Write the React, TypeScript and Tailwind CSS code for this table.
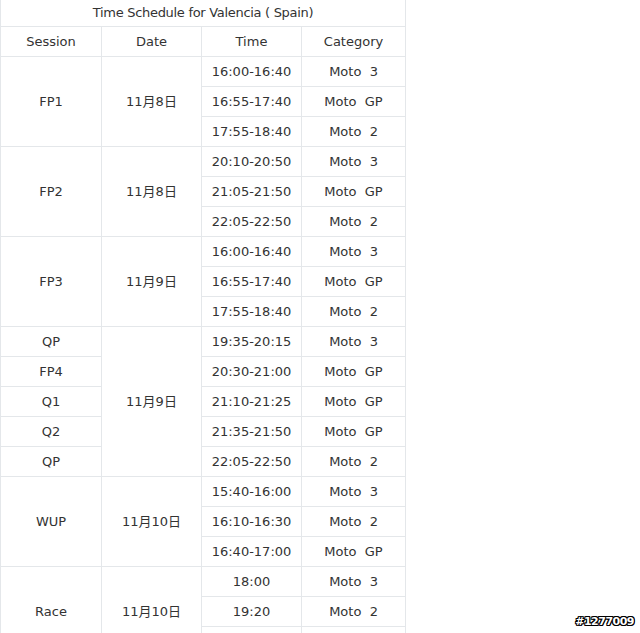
import React from "react";

type Row = { session?: string; sRows?: number; date?: string; dRows?: number; time: string; cat: string };

const rows: Row[] = [
    { session: "FP1", sRows: 3, date: "11月8日", dRows: 3, time: "16:00-16:40", cat: "Moto\u00a0 3" },
    { time: "16:55-17:40", cat: "Moto\u00a0 GP" },
    { time: "17:55-18:40", cat: "Moto\u00a0 2" },
    { session: "FP2", sRows: 3, date: "11月8日", dRows: 3, time: "20:10-20:50", cat: "Moto\u00a0 3" },
    { time: "21:05-21:50", cat: "Moto\u00a0 GP" },
    { time: "22:05-22:50", cat: "Moto\u00a0 2" },
    { session: "FP3", sRows: 3, date: "11月9日", dRows: 3, time: "16:00-16:40", cat: "Moto\u00a0 3" },
    { time: "16:55-17:40", cat: "Moto\u00a0 GP" },
    { time: "17:55-18:40", cat: "Moto\u00a0 2" },
    { session: "QP", sRows: 1, date: "11月9日", dRows: 5, time: "19:35-20:15", cat: "Moto\u00a0 3" },
    { session: "FP4", sRows: 1, time: "20:30-21:00", cat: "Moto\u00a0 GP" },
    { session: "Q1", sRows: 1, time: "21:10-21:25", cat: "Moto\u00a0 GP" },
    { session: "Q2", sRows: 1, time: "21:35-21:50", cat: "Moto\u00a0 GP" },
    { session: "QP", sRows: 1, time: "22:05-22:50", cat: "Moto\u00a0 2" },
    { session: "WUP", sRows: 3, date: "11月10日", dRows: 3, time: "15:40-16:00", cat: "Moto\u00a0 3" },
    { time: "16:10-16:30", cat: "Moto\u00a0 2" },
    { time: "16:40-17:00", cat: "Moto\u00a0 GP" },
    { session: "Race", sRows: 3, date: "11月10日", dRows: 3, time: "18:00", cat: "Moto\u00a0 3" },
    { time: "19:20", cat: "Moto\u00a0 2" },
    { time: "20:00", cat: "Moto\u00a0 GP" },
];

const cell = "border border-[#e4e7ea] text-center align-middle p-0";

export default function App() {
    return (
        <div
            className="relative w-[640px] h-[633px] overflow-hidden bg-white text-[#333] text-[13px]"
            style={{ fontFamily: '"DejaVu Sans", "Noto Sans CJK SC", sans-serif' }}
        >
            <table className="border-collapse table-fixed w-[405px] -mt-px">
                <colgroup>
                    <col className="w-[101px]" />
                    <col className="w-[100px]" />
                    <col className="w-[100px]" />
                    <col className="w-[104px]" />
                </colgroup>
                <tbody>
                    {/* title */}
                    <tr className="h-[27px]">
                        <td colSpan={4} className={cell + " tracking-[-0.3px]"}>
                            Time Schedule for Valencia ( Spain)
                        </td>
                    </tr>
                    <tr className="h-[30px]">
                        <td className={cell}>Session</td>
                        <td className={cell}>Date</td>
                        <td className={cell}>Time</td>
                        <td className={cell}>Category</td>
                    </tr>
                    {rows.map((r, i) => (
                        <tr className="h-[30px]" key={i}>
                            {r.session && (
                                <td rowSpan={r.sRows} className={cell}>
                                    {r.session}
                                </td>
                            )}
                            {r.date && (
                                <td rowSpan={r.dRows} className={cell}>
                                    {r.date}
                                </td>
                            )}
                            <td className={cell}>{r.time}</td>
                            <td className={cell}>{r.cat}</td>
                        </tr>
                    ))}
                </tbody>
            </table>
            {/* watermark */}
            <div
                className="absolute right-[6px] bottom-[3px] text-[11px] font-bold text-white tracking-[-0.5px]"
                style={{ fontFamily: '"DejaVu Sans", sans-serif', textShadow: "1px 0 #000, -1px 0 #000, 0 1px #000, 0 -1px #000, 1px 1px #000, -1px -1px #000, 1px -1px #000, -1px 1px #000" }}
            >
                #1277009
            </div>
        </div>
    );
}
